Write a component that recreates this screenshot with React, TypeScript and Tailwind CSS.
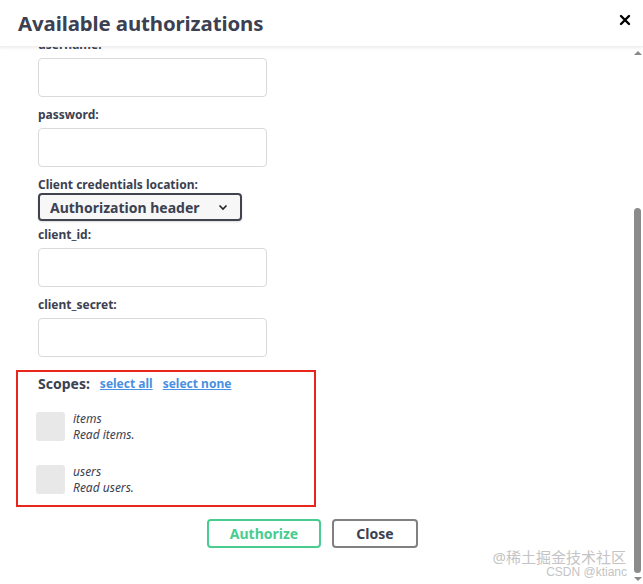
import React from 'react';

const labelCls = 'block text-[12px] leading-[16px] font-bold text-[#3b4151]';
const inputCls = 'block w-[229px] h-[39px] rounded-[4px] border border-[#d9d9d9] bg-white';

const Field = ({ label, className = '' }: { label: string; className?: string }) => (
  <div className={className}>
    <label className={labelCls}>{label}</label>
    <input className={`${inputCls} mt-[5px]`} />
  </div>
);

const Scope = ({ name, desc }: { name: string; desc: string }) => (
  <div className="flex items-start gap-[8px] -ml-[2px]">
    <div className="w-[29px] h-[29px] rounded-[3px] bg-[#e8e8e8]" />
    <div className="italic text-[12px] leading-[16px] text-[#3b4151] -mt-[1px]">
      <div>{name}</div>
      <div>{desc}</div>
    </div>
  </div>
);

const App = () => {
  return (
    <div
      className="relative w-[643px] h-[584px] bg-white flex flex-col overflow-hidden"
      style={{ fontFamily: '"Noto Sans", "Noto Sans CJK SC", sans-serif' }}
    >
      {/* Header */}
      <div className="relative z-10 h-[47px] shrink-0 flex items-center justify-between pl-[18px] pr-[12px] bg-white shadow-[0_1px_3px_rgba(0,0,0,0.08)] border-b border-[#f0f0f0]">
        <h3 className="text-[20.4px] font-bold text-[#3b4151] tracking-[-0.1px]">Available authorizations</h3>
        <svg width="12" height="12" viewBox="0 0 12 12" className="mt-[-6px]">
          <path d="M2 2 L10 10 M10 2 L2 10" stroke="#000" strokeWidth="2.4" strokeLinecap="round" />
        </svg>
      </div>

      {/* Body */}
      <div className="flex-1 flex min-h-0">
        <div className="flex-1 overflow-hidden">
          <div className="-mt-[10px] pl-[38px]">
            <Field label="username:" />
            <Field label="password:" className="mt-[10px]" />
            <div className="mt-[10px]">
              <label className={labelCls}>Client credentials location:</label>
              <div className="mt-0 w-[204px] h-[28px] rounded-[4px] border-2 border-[#41444e] bg-[#f7f7f7] flex items-center justify-between pl-[10px] pr-[12px] shadow-[0_1px_2px_rgba(0,0,0,0.15)]">
                <span className="text-[14px] font-bold text-[#3b4151]">Authorization header</span>
                <svg width="10" height="7" viewBox="0 0 10 7">
                  <path d="M1.5 1.5 L5 5 L8.5 1.5" fill="none" stroke="#222" strokeWidth="1.6" />
                </svg>
              </div>
            </div>
            <Field label="client_id:" className="mt-[6px]" />
            <Field label="client_secret:" className="mt-[10px]" />
          </div>

          {/* Scopes */}
          <div className="ml-[16px] mt-[13px] w-[300px] h-[137px] border-2 border-[#e8261c] pl-[20px] pt-[1px]">
            <div className="flex items-center gap-[8px]">
              <span className="text-[14px] font-bold text-[#3b4151] mr-[2px]">Scopes:</span>
              <a className="text-[12px] font-bold text-[#4990e2] underline">select all</a>
              <a className="text-[12px] font-bold text-[#4990e2] underline ml-[2px]">select none</a>
            </div>
            <div className="mt-[18px] flex flex-col gap-[22px]">
              <Scope name="items" desc="Read items." />
              <Scope name="users" desc="Read users." />
            </div>
          </div>

          {/* Buttons */}
          <div className="mt-[12px] ml-[207px] flex gap-[11px]">
            <button className="w-[114px] h-[29px] rounded-[4px] border-2 border-[#49cc90] text-[14px] font-bold text-[#49cc90] bg-white">
              Authorize
            </button>
            <button className="w-[86px] h-[29px] rounded-[4px] border-2 border-[#808080] text-[14px] font-bold text-[#3b4151] bg-white">
              Close
            </button>
          </div>
        </div>

        {/* Scrollbar */}
        <div className="w-[9px] shrink-0 flex flex-col items-center mr-[1px]">
          <svg width="8" height="6" viewBox="0 0 8 6" className="mt-[3px]">
            <path d="M0 5 L4 1 L8 5 Z" fill="#8a8a8a" />
          </svg>
          <div className="w-[7px] mt-[152px] flex-1 rounded-full bg-[#8b8b8b]" />
          <svg width="8" height="6" viewBox="0 0 8 6" className="mt-[3px] mb-[2px]">
            <path d="M0 1 L4 5 L8 1 Z" fill="#8a8a8a" />
          </svg>
        </div>
      </div>

      {/* Watermark */}
      <div className="absolute right-[17px] bottom-[5px] flex flex-col items-end text-[#c4c4c4] pointer-events-none">
        <span className="text-[15px] leading-[17px]">@稀土掘金技术社区</span>
        <span className="text-[12px] leading-[13px] mr-[-1px]" style={{ fontFamily: '"Liberation Sans", sans-serif' }}>CSDN @ktianc</span>
      </div>
    </div>
  );
};

export default App;
